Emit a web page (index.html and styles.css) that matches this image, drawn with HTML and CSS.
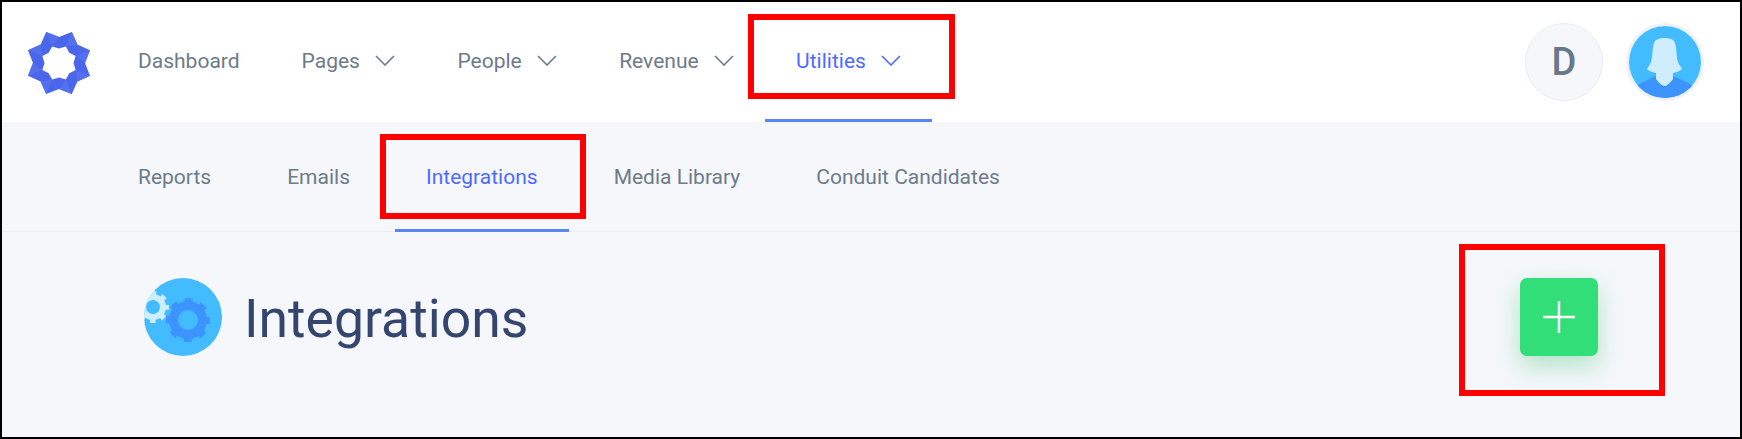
FILE: index.html
```html
<!DOCTYPE html>
<html lang="en">
<head>
    <meta charset="UTF-8">
    <title>Integrations</title>
    <link rel="stylesheet" href="styles.css">
</head>
<body>
<div class="frame">
    <header class="topbar">
        <svg class="logo" viewBox="-33 -33 66 66">
            <path fill="#4a66ea" fill-rule="evenodd" d="M12.8 -31 L18.4 -18.4 L31 -12.8 L26 0 L31 12.8 L18.4 18.4 L12.8 31 L0 26 L-12.8 31 L-18.4 18.4 L-31 12.8 L-26 0 L-31 -12.8 L-18.4 -18.4 L-12.8 -31 L0 -26 Z M6.9 -16.6 L10.3 -10.3 L16.6 -6.9 L14.5 0 L16.6 6.9 L10.3 10.3 L6.9 16.6 L0 14.5 L-6.9 16.6 L-10.3 10.3 L-16.6 6.9 L-14.5 0 L-16.6 -6.9 L-10.3 -10.3 L-6.9 -16.6 L0 -14.5 Z"/>
            <path fill="#5470ee" d="M12.8 -31 L18.4 -18.4 L6.9 -16.6 Z M31 12.8 L18.4 18.4 L16.6 6.9 Z M-12.8 31 L-18.4 18.4 L-6.9 16.6 Z M-31 -12.8 L-18.4 -18.4 L-16.6 -6.9 Z M31 -12.8 L26 0 L16.6 -6.9 Z M12.8 31 L0 26 L6.9 16.6 Z M-31 12.8 L-26 0 L-16.6 6.9 Z M-12.8 -31 L0 -26 L-6.9 -16.6 Z"/>
        </svg>
        <nav class="main-nav">
            <a class="nav-item">Dashboard</a>
            <a class="nav-item">Pages <svg class="chevron" viewBox="0 0 20 11"><path d="M1 1 L10 10 L19 1"/></svg></a>
            <a class="nav-item">People <svg class="chevron" viewBox="0 0 20 11"><path d="M1 1 L10 10 L19 1"/></svg></a>
            <a class="nav-item">Revenue <svg class="chevron" viewBox="0 0 20 11"><path d="M1 1 L10 10 L19 1"/></svg></a>
            <a class="nav-item active">Utilities <svg class="chevron" viewBox="0 0 20 11"><path d="M1 1 L10 10 L19 1"/></svg></a>
        </nav>
        <div class="user-area">
            <div class="initial">D</div>
            <div class="avatar">
                <svg viewBox="0 0 72 72">
                    <defs><clipPath id="face"><circle cx="36" cy="36" r="36"/></clipPath></defs>
                    <circle cx="36" cy="36" r="36" fill="#42bcff"/>
                    <path clip-path="url(#face)" fill="#3d93ff" d="M0 64 L14 56 L27 50 L44 50 L57 56 L72 64 L72 72 L0 72 Z"/>
                    <path fill="#d0edff" d="M26 15 C29 11 42 11 45 15 C48 20 47 30 49 36 C50 39 52 41 53 43 C50 46 47 46 44 47 L44 53 C41 57 38 60 35.5 60 C33 60 30 57 27 53 L27 47 C24 46 21 46 18 43 C19 41 21 39 22 36 C24 30 23 20 26 15 Z"/>
                </svg>
            </div>
        </div>
    </header>
    <nav class="sub-nav">
        <a class="sub-item">Reports</a>
        <a class="sub-item">Emails</a>
        <a class="sub-item active">Integrations</a>
        <a class="sub-item">Media Library</a>
        <a class="sub-item">Conduit Candidates</a>
    </nav>
    <main class="content">
        <div class="title-row">
            <svg class="title-icon" viewBox="0 0 78 78">
                <defs><clipPath id="disc"><circle cx="39" cy="39" r="39"/></clipPath></defs>
                <circle cx="39" cy="39" r="39" fill="#42bcff"/>
                <g clip-path="url(#disc)" fill="none">
                    <circle cx="9" cy="29" r="10" stroke="#cdeeff" stroke-width="6"/>
                    <circle cx="9" cy="29" r="14" stroke="#cdeeff" stroke-width="4" stroke-dasharray="5.5 5.5" stroke-dashoffset="2.75"/>
                    <circle cx="44" cy="42" r="14.5" stroke="#3d93ff" stroke-width="9"/>
                    <circle cx="44" cy="42" r="19.5" stroke="#3d93ff" stroke-width="5" stroke-dasharray="7.66 7.66" stroke-dashoffset="3.83"/>
                </g>
            </svg>
            <h1 class="page-title">Integrations</h1>
        </div>
        <button class="add-btn">
            <svg viewBox="0 0 32 32"><path d="M16 0 V32 M0 16 H32"/></svg>
        </button>
    </main>
    <div class="mark mark-utilities"></div>
    <div class="mark mark-integrations"></div>
    <div class="mark mark-add"></div>
</div>
</body>
</html>
```
FILE: styles.css
```css
* {
    box-sizing: border-box;
}
body {
    margin: 0;
    font-family: Roboto, "Liberation Sans", sans-serif;
    background-color: #fff;
}
.frame {
    position: relative;
    height: 439px;
    border: 2px solid #000;
    background-color: #f5f7fb;
    display: flex;
    flex-direction: column;
    overflow: hidden;
}
.topbar {
    height: 120px;
    background-color: #fff;
    display: flex;
    align-items: center;
    padding: 0 36px 0 24px;
}
.logo {
    width: 66px;
    height: 66px;
    flex: none;
    margin-top: 2px;
}
.main-nav {
    display: flex;
    align-self: stretch;
    margin-left: 15px;
}
.nav-item {
    display: flex;
    align-items: center;
    gap: 15.5px;
    padding: 0 31px;
    font-size: 21px;
    color: #6d7b8a;
    border-bottom: 3px solid transparent;
}
.nav-item.active {
    color: #4f6bff;
    border-bottom-color: #5a86f7;
}
.chevron {
    width: 20px;
    height: 11px;
    fill: none;
    stroke: #6d7b8a;
    stroke-width: 1.6;
}
.active .chevron {
    stroke: #4f6bff;
}
.user-area {
    margin-left: auto;
    display: flex;
    gap: 23px;
}
.initial {
    width: 78px;
    height: 78px;
    border-radius: 50%;
    background-color: #f5f7fb;
    border: 1px solid #e9ecf3;
    display: flex;
    align-items: center;
    justify-content: center;
    font-size: 38px;
    font-weight: 500;
    color: #66788a;
}
.avatar {
    width: 78px;
    height: 78px;
    border-radius: 50%;
    border: 3px solid #eef1f8;
    background-color: #fff;
}
.avatar svg {
    display: block;
    width: 72px;
    height: 72px;
}
.sub-nav {
    height: 110px;
    display: flex;
    padding-left: 105px;
    border-bottom: 1px solid #e8ecf3;
}
.sub-item {
    display: flex;
    align-items: center;
    padding: 2px 31px 0;
    margin-right: 14px;
    font-size: 21px;
    color: #6d7b8a;
    border-bottom: 3px solid transparent;
    margin-bottom: -1px;
}
.sub-item.active {
    color: #4f6bff;
    border-bottom-color: #5a86f7;
}
.content {
    display: flex;
    justify-content: space-between;
    align-items: flex-start;
    padding: 46px 142px 0 142px;
}
.title-row {
    display: flex;
    align-items: center;
    gap: 22px;
}
.title-icon {
    width: 78px;
    height: 78px;
    flex: none;
}
.page-title {
    margin: 0;
    padding-top: 2px;
    font-size: 53.5px;
    font-weight: 400;
    color: #34456e;
}
.add-btn {
    width: 78px;
    height: 78px;
    padding: 0;
    border: none;
    border-radius: 7px;
    background-color: #32de78;
    box-shadow: 0 10px 24px rgba(50, 190, 110, 0.35);
    display: flex;
    align-items: center;
    justify-content: center;
}
.add-btn svg {
    width: 32px;
    height: 32px;
    fill: none;
    stroke: #fff;
    stroke-width: 2.5;
}
/* red annotation boxes drawn on top of the screenshot */
.mark {
    position: absolute;
    border: 6px solid #f00;
}
.mark-utilities {
    left: 746px;
    top: 12px;
    width: 207px;
    height: 85px;
}
.mark-integrations {
    left: 378px;
    top: 132px;
    width: 206px;
    height: 85px;
}
.mark-add {
    left: 1457px;
    top: 242px;
    width: 206px;
    height: 152px;
}
```
